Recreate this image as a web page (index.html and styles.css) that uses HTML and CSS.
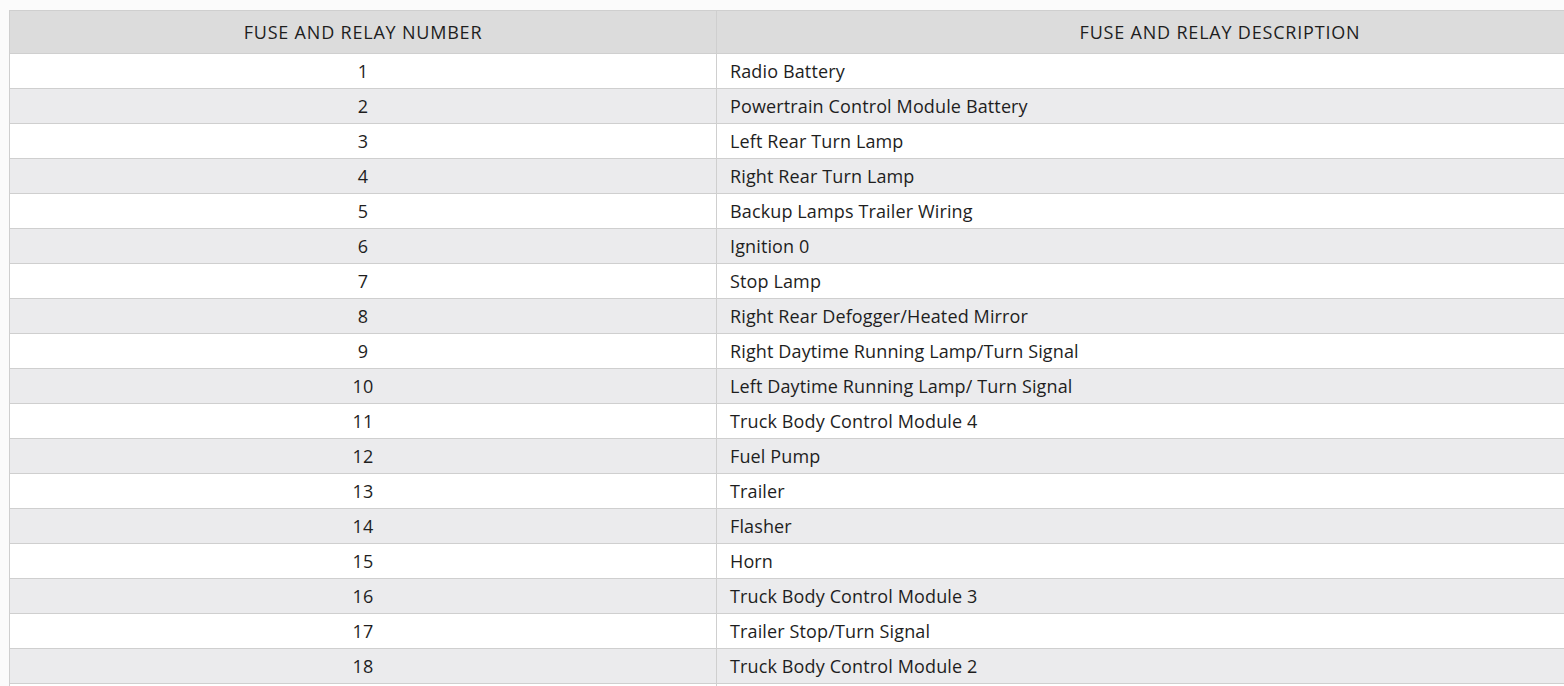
FILE: index.html
```html
<!DOCTYPE html>
<html>
<head>
<meta charset="utf-8">
<link rel="stylesheet" href="styles.css">
</head>
<body>
<table class="fuse-table">
  <colgroup><col class="col-num"><col class="col-desc"></colgroup>
  <thead>
    <tr><th>FUSE AND RELAY NUMBER</th><th>FUSE AND RELAY DESCRIPTION</th></tr>
  </thead>
  <tbody>
    <tr><td class="num">1</td><td>Radio Battery</td></tr>
    <tr><td class="num">2</td><td>Powertrain Control Module Battery</td></tr>
    <tr><td class="num">3</td><td>Left Rear Turn Lamp</td></tr>
    <tr><td class="num">4</td><td>Right Rear Turn Lamp</td></tr>
    <tr><td class="num">5</td><td>Backup Lamps Trailer Wiring</td></tr>
    <tr><td class="num">6</td><td>Ignition 0</td></tr>
    <tr><td class="num">7</td><td>Stop Lamp</td></tr>
    <tr><td class="num">8</td><td>Right Rear Defogger/Heated Mirror</td></tr>
    <tr><td class="num">9</td><td>Right Daytime Running Lamp/Turn Signal</td></tr>
    <tr><td class="num">10</td><td>Left Daytime Running Lamp/ Turn Signal</td></tr>
    <tr><td class="num">11</td><td>Truck Body Control Module 4</td></tr>
    <tr><td class="num">12</td><td>Fuel Pump</td></tr>
    <tr><td class="num">13</td><td>Trailer</td></tr>
    <tr><td class="num">14</td><td>Flasher</td></tr>
    <tr><td class="num">15</td><td>Horn</td></tr>
    <tr><td class="num">16</td><td>Truck Body Control Module 3</td></tr>
    <tr><td class="num">17</td><td>Trailer Stop/Turn Signal</td></tr>
    <tr><td class="num">18</td><td>Truck Body Control Module 2</td></tr>
    <tr><td class="num"></td><td></td></tr>
  </tbody>
</table>
</body>
</html>
```

FILE: styles.css
```css
html, body {
  margin: 0;
  padding: 0;
  overflow: hidden;
  background: #fbfbfb;
}
body {
  padding: 10px 0 0 9px;
  font-family: "Open Sans", "Noto Sans", sans-serif;
  color: #1e1e1e;
}
.fuse-table {
  border-collapse: collapse;
  table-layout: fixed;
  width: 1715px;
  font-size: 18px;
}
.col-num { width: 707px; }
.fuse-table th, .fuse-table td {
  border: 1px solid #cfcfcf;
  padding: 0 13px;
  font-weight: normal;
  white-space: nowrap;
  line-height: 24px;
}
.fuse-table th {
  background: #dcdcdc;
  height: 42px;
  text-align: center;
  letter-spacing: 0.8px;
}
.fuse-table td {
  height: 34px;
  text-align: left;
  letter-spacing: 0.13px;
}
.fuse-table td.num { text-align: center; }
.fuse-table tbody tr:nth-child(odd) { background: #ffffff; }
.fuse-table tbody tr:nth-child(even) { background: #ebebed; }
```
